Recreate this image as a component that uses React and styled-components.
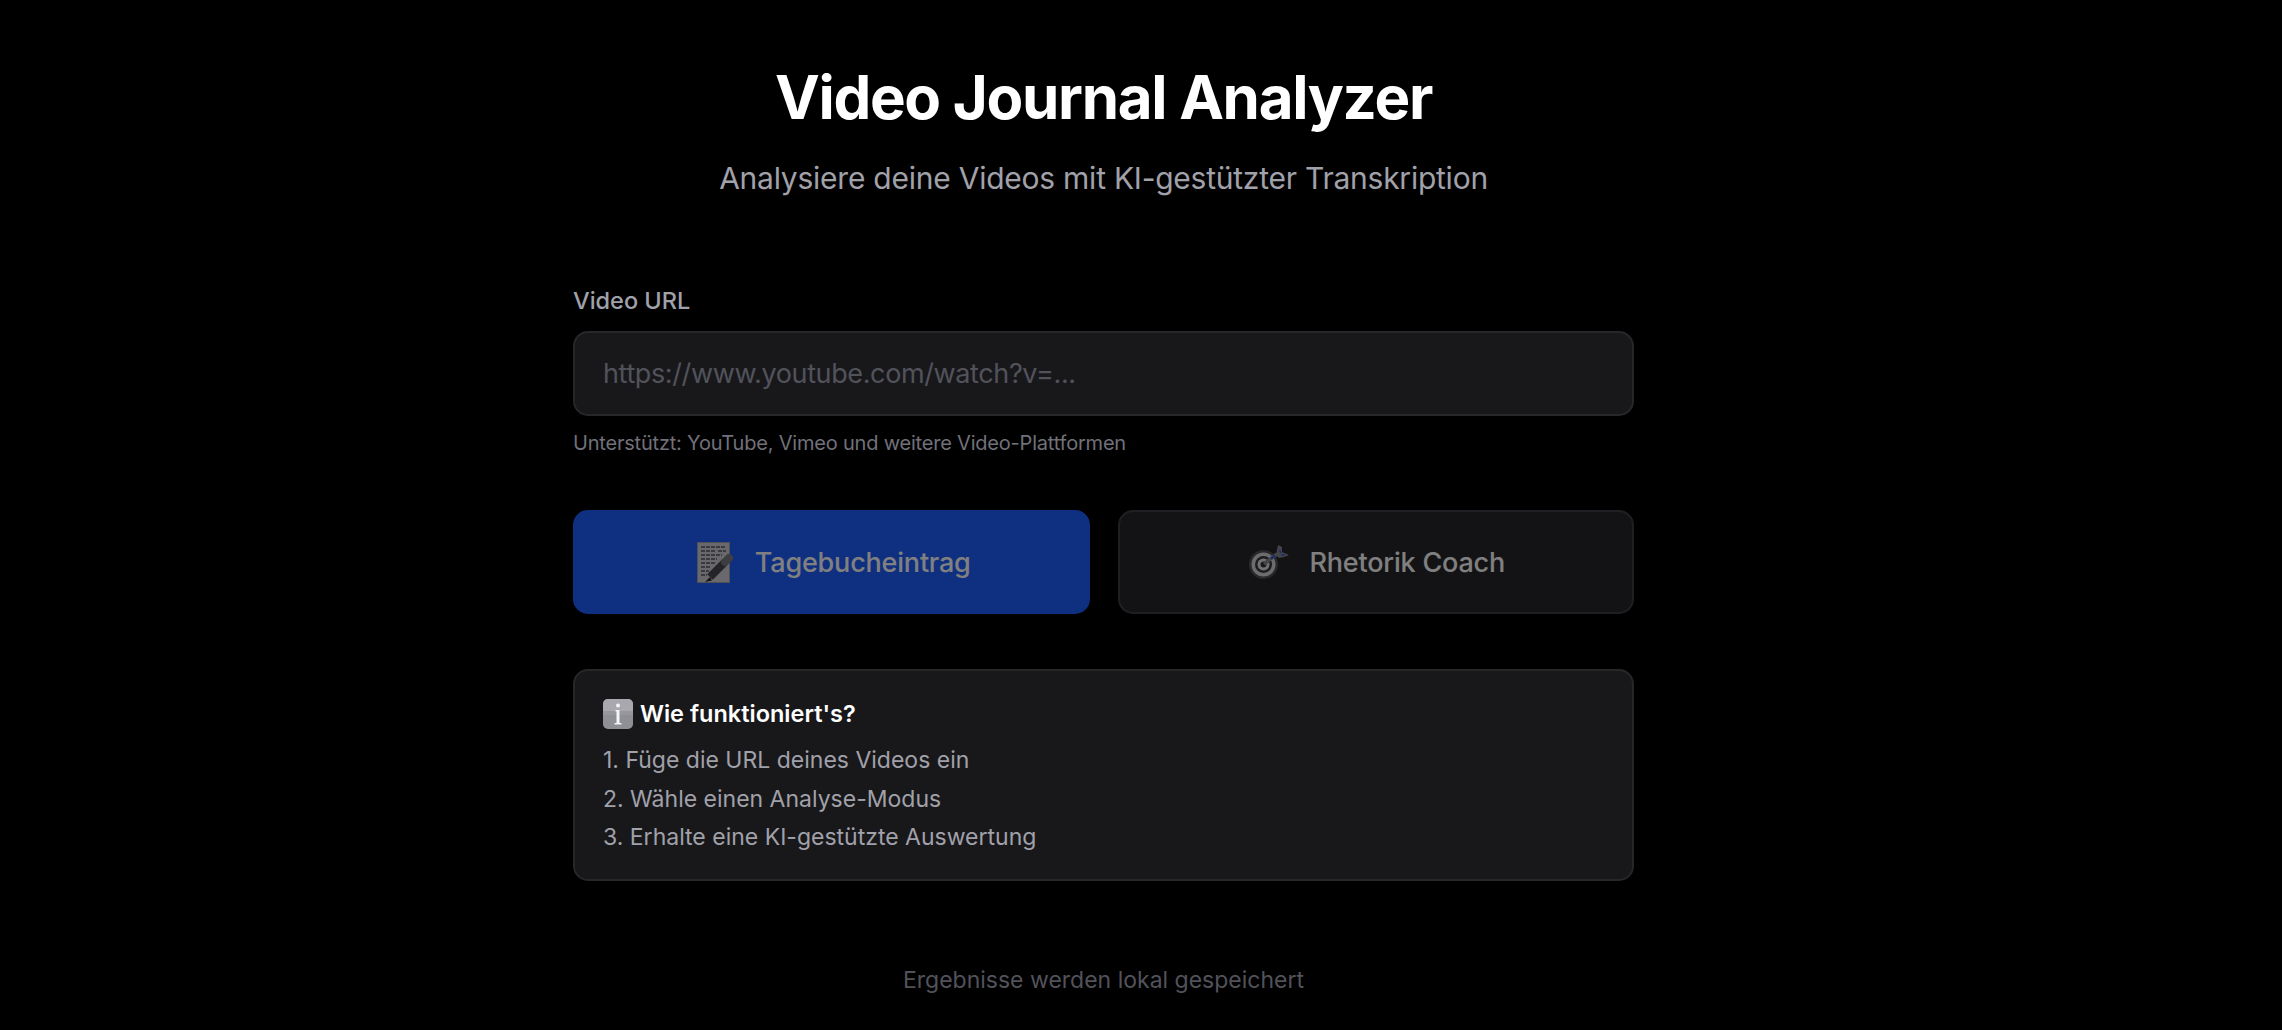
import { createGlobalStyle, styled } from 'styled-components';

const GlobalStyle = createGlobalStyle`
  html, body {
    margin: 0;
    background: #000;
  }
  body {
    font-family: Inter, "Liberation Sans", sans-serif;
  }
`;

const Page = styled.div`
  min-height: 1030px;
  padding: 67px 75px 0 0;
  box-sizing: border-box;
  display: flex;
  flex-direction: column;
  align-items: center;
`;

const Main = styled.main`
  width: 1061px;
`;

const Header = styled.header`
  text-align: center;
  margin-bottom: 89px;
`;

const Title = styled.h1`
  margin: 0;
  font-size: 60px;
  line-height: 60px;
  font-weight: 700;
  letter-spacing: -1.3px;
  color: #fff;
`;

const Subtitle = styled.p`
  margin: 33px 0 0;
  font-size: 30px;
  line-height: 36px;
  font-weight: 400;
  letter-spacing: -0.24px;
  color: #a1a1aa;
`;

const Label = styled.label`
  display: block;
  font-size: 23.5px;
  line-height: 32px;
  font-weight: 450;
  color: #a1a1aa;
  margin-bottom: 14px;
`;

const UrlInput = styled.input`
  display: block;
  width: 100%;
  height: 85px;
  box-sizing: border-box;
  padding: 0 28px;
  background: #18181b;
  border: 2px solid #27272a;
  border-radius: 15px;
  outline: none;
  font-family: inherit;
  font-size: 27px;
  letter-spacing: -0.38px;
  color: #fff;

  &::placeholder {
    color: #52525b;
    opacity: 1;
  }
`;

const Hint = styled.p`
  margin: 13px 0 0;
  font-size: 20px;
  line-height: 28px;
  letter-spacing: -0.2px;
  color: #71717a;
`;

const Modes = styled.div`
  display: grid;
  grid-template-columns: 1fr 1fr;
  gap: 28px;
  margin-top: 53px;
`;

const ModeButton = styled.button`
  height: 104px;
  display: flex;
  align-items: center;
  justify-content: center;
  gap: ${(p) => (p.$active ? '24px' : '21px')};
  padding: 0 0 0 ${(p) => (p.$active ? '5px' : '2px')};
  border-radius: 15px;
  border: 2px solid ${(p) => (p.$active ? '#1e5eff' : '#3f3f46')};
  background: ${(p) => (p.$active ? '#1e5eff' : '#27272a')};
  color: #fff;
  opacity: 0.5;
  font-family: inherit;
  font-size: 27px;
  font-weight: 450;
  letter-spacing: -0.2px;
`;

const InfoBox = styled.section`
  margin-top: 55px;
  padding: 27px 28px 22px;
  background: #18181b;
  border: 2px solid #27272a;
  border-radius: 15px;
`;

const InfoTitle = styled.h3`
  margin: 0 0 11px;
  display: flex;
  align-items: center;
  gap: 7px;
  font-size: 23.5px;
  line-height: 32px;
  font-weight: 600;
  color: #fff;
`;

const Steps = styled.ol`
  margin: 0;
  padding: 0;
  list-style: none;
  font-size: 23px;
  line-height: 38.5px;
  color: #a1a1aa;
`;

const Footer = styled.footer`
  margin-top: 83px;
  font-size: 23px;
  line-height: 32px;
  color: #52525b;
`;

const MemoIcon = () => (
  <svg width="34" height="41" viewBox="0 0 34 41" style={{ overflow: 'visible' }}>
    <rect width="33" height="41" fill="#d2d2da" />
    <rect x="0.5" y="0.5" width="32" height="40" fill="none" stroke="#a4a4ac" />
    <path
      d="M4 5h24M4 9h15M21 9h8M4 13h21M4 17h16M4 21h14M4 25h10M4 29h8M4 33h6"
      stroke="#5a5a62"
      strokeWidth="1.4"
      strokeDasharray="4 1"
    />
    <path d="M13 35 L8 40 L15 38.5 Z" fill="#2c2c32" />
    <path d="M13 35 L28 20" stroke="#4a4a52" strokeWidth="8" />
    <path d="M28 20 L32 16" stroke="#7c7c84" strokeWidth="8" strokeLinecap="round" />
  </svg>
);

const DartIcon = () => (
  <svg width="40" height="34" viewBox="0 0 40 34">
    <circle cx="14.5" cy="19.5" r="14.5" fill="#544e52" />
    <circle cx="14.5" cy="19.5" r="12" fill="#d8d8dc" />
    <circle cx="14.5" cy="19.5" r="8.5" fill="#3a383c" />
    <circle cx="14.5" cy="19.5" r="6" fill="#e6e6ea" />
    <circle cx="14.5" cy="19.5" r="3" fill="#353336" />
    <path d="M15 19 L28 9" stroke="#8a8a92" strokeWidth="3.5" />
    <path d="M22 13.5 L26 10.5" stroke="#2f5fd0" strokeWidth="2.5" />
    <path d="M27 10 L29 0 L33 2 L33 7 L40 10 L35 12 L30 13 Z" fill="#8a8a92" />
    <path d="M30.5 5 L32 8 M32 10 L36 10" stroke="#2f5fd0" strokeWidth="1.6" />
  </svg>
);

const InfoIcon = () => (
  <svg width="30" height="30" viewBox="0 0 30 30">
    <rect width="30" height="30" rx="5" fill="#8f8f96" />
    <path d="M0 5a5 5 0 0 1 5-5h20a5 5 0 0 1 5 5v7H0z" fill="#a8a8ae" />
    <rect x="0" y="12" width="30" height="4" fill="#9a9aa0" opacity="0.7" />
    <circle cx="15" cy="6.5" r="2" fill="#f4f4f6" />
    <path d="M12.5 11h4v13h2v1.5h-7V24h2V12.5h-1z" fill="#f4f4f6" />
  </svg>
);

const steps = [
  '1. Füge die URL deines Videos ein',
  '2. Wähle einen Analyse-Modus',
  '3. Erhalte eine KI-gestützte Auswertung',
];

const App = () => {
  return (
    <Page>
      <GlobalStyle />
      <Main>
        <Header>
          <Title>Video Journal Analyzer</Title>
          <Subtitle>Analysiere deine Videos mit KI-gestützter Transkription</Subtitle>
        </Header>

        <Label htmlFor="url">Video URL</Label>
        <UrlInput id="url" placeholder="https://www.youtube.com/watch?v=..." />
        <Hint>Unterstützt: YouTube, Vimeo und weitere Video-Plattformen</Hint>

        <Modes>
          <ModeButton $active disabled>
            <MemoIcon />
            Tagebucheintrag
          </ModeButton>
          <ModeButton disabled>
            <DartIcon />
            Rhetorik Coach
          </ModeButton>
        </Modes>

        <InfoBox>
          <InfoTitle>
            <InfoIcon />
            Wie funktioniert's?
          </InfoTitle>
          <Steps>
            {steps.map((step) => (
              <li key={step}>{step}</li>
            ))}
          </Steps>
        </InfoBox>
      </Main>
      <Footer>Ergebnisse werden lokal gespeichert</Footer>
    </Page>
  );
};

export default App;
